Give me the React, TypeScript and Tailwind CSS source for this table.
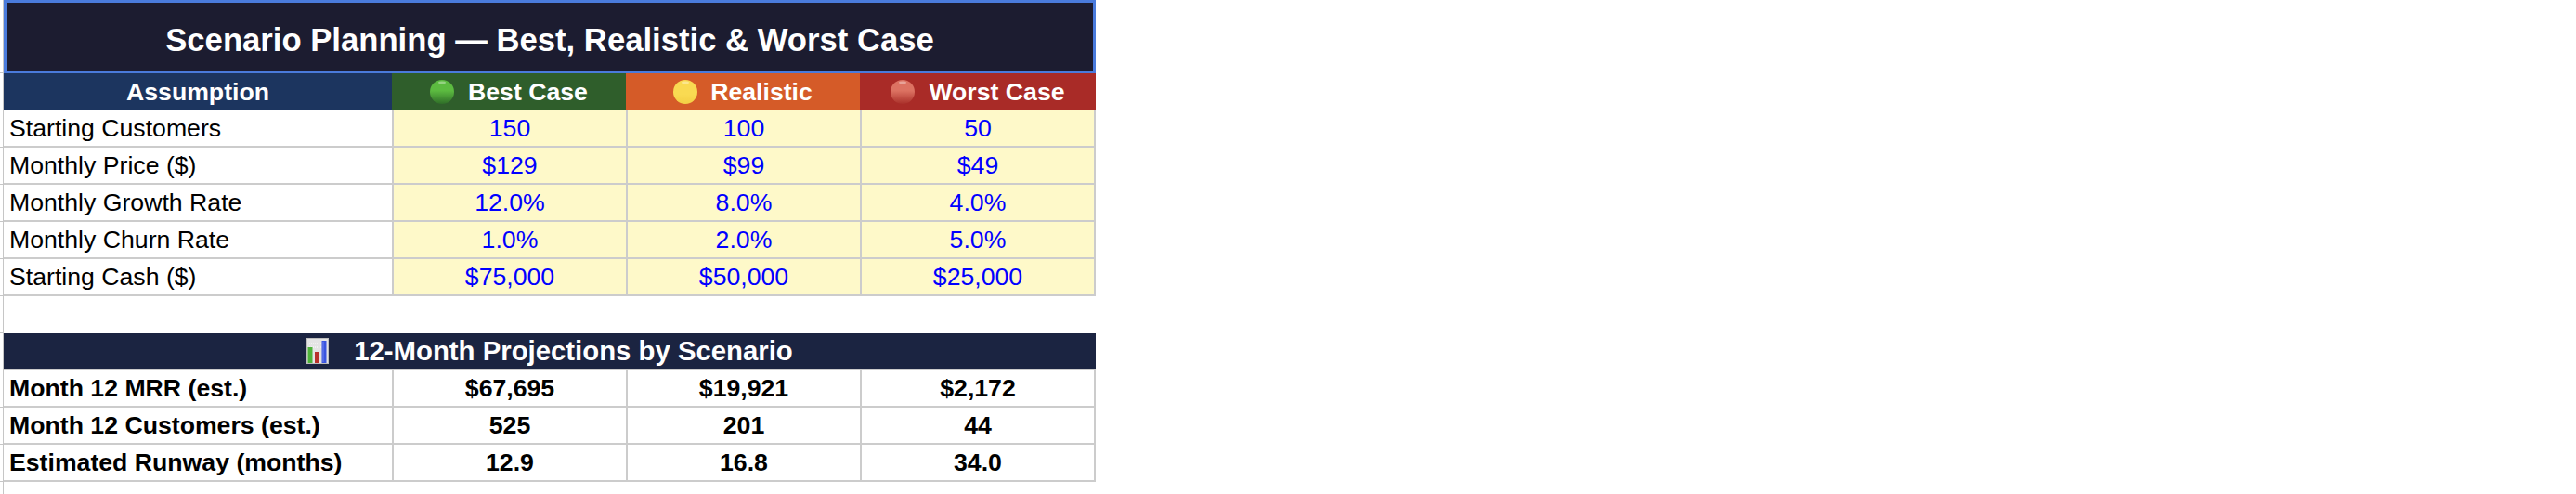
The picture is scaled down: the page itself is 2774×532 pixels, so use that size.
import React from "react";

const FONT = "font-['Liberation_Sans',Arial,Helvetica,sans-serif]";

function Dot({ id, top, bottom, fade }: { id: string; top: string; bottom: string; fade?: boolean }) {
  return (
    <svg width="26" height="26" viewBox="0 0 26 26" className="shrink-0">
      <defs>
        <linearGradient id={id} x1="0" y1="0" x2="0" y2="1">
          <stop offset="0" stopColor={top} />
          <stop offset={fade ? "0.45" : "0.6"} stopColor={top} />
          <stop offset="1" stopColor={bottom} />
        </linearGradient>
      </defs>
      <circle cx="13" cy="13" r="13" fill={`url(#${id})`} />
      <ellipse cx="13" cy="3" rx="4" ry="1.4" fill="#ffffff" opacity="0.35" />
    </svg>
  );
}

function ChartIcon() {
  return (
    <svg width="24" height="28" viewBox="0 0 24 28" className="shrink-0">
      <rect x="0" y="0" width="24" height="28" fill="#e4e4e4" />
      <rect x="0.5" y="0.5" width="23" height="27" fill="none" stroke="#bdbdbd" />
      <line x1="3" y1="6" x2="16" y2="6" stroke="#ffffff" strokeDasharray="1 1" />
      <line x1="3" y1="10" x2="16" y2="10" stroke="#ffffff" strokeDasharray="1 1" />
      <rect x="1.5" y="10" width="5" height="17" fill="#4fb33a" />
      <rect x="9" y="15" width="5" height="12" fill="#b8322b" />
      <rect x="16.5" y="3" width="5" height="24" fill="#3a55e0" />
      <rect x="17.5" y="4" width="1" height="22" fill="#8fa0f5" opacity="0.6" />
    </svg>
  );
}

function Gutter() {
  return <div className="w-[4px] shrink-0 border-r border-b border-[#c6c6c6]" />;
}

const dataRows = [
  ["Starting Customers", "150", "100", "50"],
  ["Monthly Price ($)", "$129", "$99", "$49"],
  ["Monthly Growth Rate", "12.0%", "8.0%", "4.0%"],
  ["Monthly Churn Rate", "1.0%", "2.0%", "5.0%"],
  ["Starting Cash ($)", "$75,000", "$50,000", "$25,000"],
];

const projRows = [
  ["Month 12 MRR (est.)", "$67,695", "$19,921", "$2,172"],
  ["Month 12 Customers (est.)", "525", "201", "44"],
  ["Estimated Runway (months)", "12.9", "16.8", "34.0"],
];

function Row({ cells, bold }: { cells: string[]; bold?: boolean }) {
  const weight = bold ? "font-bold text-black" : "font-normal";
  return (
    <div className="flex h-[40px] shrink-0">
      <Gutter />
      <div className="grid grid-cols-[418px_252px_252px_254px] text-[26.67px] leading-none">
        <div className={`flex items-center pl-[6px] bg-white border-b-2 border-[#cccccc] text-black ${weight}`}>
          {cells[0]}
        </div>
        <div
          className={`flex items-center justify-center border-l-2 border-b-2 border-[#cccccc] ${
            bold ? "bg-white text-black font-bold" : "bg-[#fef9c9] text-[#0000ff]"
          }`}
        >
          {cells[1]}
        </div>
        <div
          className={`flex items-center justify-center border-l-2 border-b-2 border-[#cccccc] ${
            bold ? "bg-white text-black font-bold" : "bg-[#fef9c9] text-[#0000ff]"
          }`}
        >
          {cells[2]}
        </div>
        <div
          className={`flex items-center justify-center border-l-2 border-r-2 border-b-2 border-[#cccccc] ${
            bold ? "bg-white text-black font-bold" : "bg-[#fef9c9] text-[#0000ff]"
          }`}
        >
          {cells[3]}
        </div>
      </div>
    </div>
  );
}

export default function App() {
  return (
    <div className={`w-[2774px] h-[532px] bg-white overflow-hidden flex flex-col ${FONT}`}>
      {/* Title */}
      <div className="flex h-[79px] shrink-0">
        <Gutter />
        <div className="w-[1176px] border-[3px] border-[#4a7bdc] bg-[#1c1c30] flex items-center justify-center text-white font-bold text-[34.67px] pt-[6px]">
          Scenario Planning — Best, Realistic &amp; Worst Case
        </div>
      </div>

      {/* Header row */}
      <div className="flex h-[40px] shrink-0">
        <Gutter />
        <div className="grid grid-cols-[418px_252px_252px_254px] text-[26.67px] font-bold text-white">
          <div className="flex items-center justify-center bg-[#1c355f] border-b-2 border-[#cccccc]">Assumption</div>
          <div className="flex items-center justify-center gap-[15px] bg-[#2f5e2b] border-b-2 border-[#cccccc]">
            <Dot id="g" top="#5cbb40" bottom="#2f6e28" fade />
            <span>Best Case</span>
          </div>
          <div className="flex items-center justify-center gap-[14px] bg-[#d55b28] border-b-2 border-[#cccccc]">
            <Dot id="y" top="#f9da52" bottom="#f3cf45" />
            <span>Realistic</span>
          </div>
          <div className="flex items-center justify-center gap-[15px] bg-[#a92b27] border-b-2 border-[#cccccc]">
            <Dot id="r" top="#dc7262" bottom="#aa302a" fade />
            <span>Worst Case</span>
          </div>
        </div>
      </div>

      {dataRows.map((r) => (
        <Row key={r[0]} cells={r} />
      ))}

      {/* Empty row */}
      <div className="flex h-[40px] shrink-0">
        <Gutter />
      </div>

      {/* Projections header */}
      <div className="flex h-[40px] shrink-0">
        <Gutter />
        <div className="w-[1176px] bg-[#1b2441] border-b-2 border-[#cccccc] flex items-center justify-center gap-[27px] text-white font-bold text-[29.33px]">
          <ChartIcon />
          <span>12-Month Projections by Scenario</span>
        </div>
      </div>

      {projRows.map((r) => (
        <Row key={r[0]} cells={r} bold />
      ))}

      <div className="flex flex-1">
        <div className="w-[4px] shrink-0 border-r border-[#c6c6c6]" />
      </div>
    </div>
  );
}
